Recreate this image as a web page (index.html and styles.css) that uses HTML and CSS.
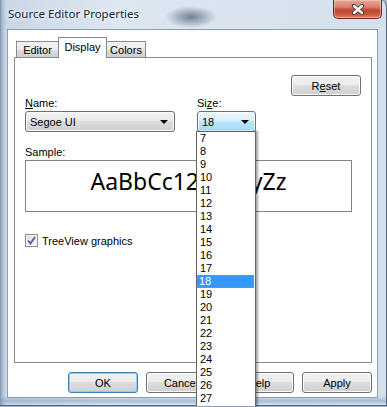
FILE: index.html
```html
<!DOCTYPE html>
<html lang="en">
  <head>
    <meta charset="UTF-8" />
    <meta name="viewport" content="width=device-width, initial-scale=1.0" />
    <title>Source Editor Properties</title>
    <link rel="stylesheet" href="styles.css">
  </head>
  <body>
    <div class="window">
      <!-- 제목 표시줄 -->
      <div class="titlebar">
        <span class="title">Source Editor Properties</span>
        <button class="close">
          <svg width="14" height="11" viewBox="0 0 14 11">
            <path d="M3 2 L11 9 M11 2 L3 9" stroke="#3b3b3b" stroke-width="4.2" stroke-linecap="round" fill="none"/>
            <path d="M3 2 L11 9 M11 2 L3 9" stroke="#ffffff" stroke-width="2.4" stroke-linecap="round" fill="none"/>
          </svg>
        </button>
      </div>

      <div class="client">
        <!-- 탭 -->
        <div class="tabs">
          <span class="tab editor">Editor</span>
          <span class="tab active">Display</span>
          <span class="tab colors">Colors</span>
        </div>

        <div class="page">
          <div class="reset-row">
            <button class="btn">R<u>e</u>set</button>
          </div>

          <div class="fields">
            <div class="field">
              <span class="label"><u>N</u>ame:</span>
              <div class="combo name-combo">Segoe UI<span class="arrow"></span></div>
            </div>
            <div class="field size-field">
              <span class="label">Si<u>z</u>e:</span>
              <div class="combo hot size-combo">18<span class="arrow"></span></div>
              <ul class="droplist">
                <li>7</li><li>8</li><li>9</li><li>10</li><li>11</li><li>12</li><li>13</li>
                <li>14</li><li>15</li><li>16</li><li>17</li><li class="selected">18</li><li>19</li><li>20</li>
                <li>21</li><li>22</li><li>23</li><li>24</li><li>25</li><li>26</li><li>27</li>
              </ul>
            </div>
          </div>

          <span class="label sample-label">Sample:</span>
          <div class="sample">AaBbCc123XxYyZz</div>

          <div class="check">
            <span class="box">
              <svg width="9" height="9" viewBox="0 0 9 9">
                <path d="M1 4.5 L3.5 7.5 L8 1" stroke="#4a5f97" stroke-width="1.8" fill="none"/>
              </svg>
            </span>
            TreeView graphics
          </div>
        </div>

        <!-- 아래 버튼 -->
        <div class="buttons">
          <button class="btn default">OK</button>
          <button class="btn">Cancel</button>
          <button class="btn">Help</button>
          <button class="btn">Apply</button>
        </div>
      </div>
    </div>
  </body>
</html>
```

FILE: styles.css
```css
body{
  margin: 0;
  width: 387px;
  height: 407px;
  overflow: hidden;
  background-color: #9fb2c6;
  font-family: "Liberation Sans", Arial, sans-serif;
  font-size: 11px;
  color: #000;
}
/* 창 전체 틀 (유리 테두리) */
.window{
  box-sizing: border-box;
  width: 387px;
  height: 406px;
  padding: 0 8px 8px 7px;
  border-right: 1px solid #55667a;
  border-bottom: 1px solid #55667a;
  border-top-right-radius: 7px;
  background:
    radial-gradient(ellipse 26px 11px at 191px 17px, rgba(70, 86, 108, 0.7), rgba(70, 86, 108, 0)),
    linear-gradient(to bottom, rgba(255, 255, 255, 0) 396px, rgba(120, 150, 190, 0.5) 401px, rgba(255, 255, 255, 0) 405px),
    linear-gradient(to right, #7b8fa5 0, #a9bcd0 2px, #c9d7e6 6px, #dde7f2 30%, #d4e0ed 100%);
}
.titlebar{
  display: flex;
  justify-content: space-between;
  align-items: flex-start;
  height: 29px;
  margin-right: -4px;
}
.title{
  margin-top: 6px;
  margin-left: 1px;
  font-family: "Noto Sans", "Open Sans", sans-serif;
  font-size: 11.5px;
  color: #14233a;
  text-shadow: 0 0 6px #fff, 0 0 3px #fff;
}
.close{
  display: flex;
  align-items: center;
  justify-content: center;
  width: 49px;
  height: 19px;
  padding: 0;
  border: 1px solid #6b2a22;
  border-top: none;
  border-radius: 0 0 5px 5px;
  background: linear-gradient(to bottom, #e7a696 0, #d7806d 40%, #c3452d 55%, #c8553c 80%, #e08a6e 100%);
  box-shadow: inset 0 0 0 1px rgba(255, 210, 200, 0.5);
}
/* 흰색 작업 영역 */
.client{
  box-sizing: border-box;
  height: 369px;
  padding: 7px 5px 0 6px;
  border: 1px solid #8d9db0;
  background-color: #fff;
}
.tabs{
  display: flex;
  align-items: flex-end;
  height: 20px;
  padding-left: 2px;
}
.tab{
  box-sizing: border-box;
  display: flex;
  justify-content: center;
  align-items: center;
  height: 16px;
  padding-top: 1px;
  border: 1px solid #898c95;
  border-bottom: none;
  background: linear-gradient(to bottom, #f2f2f2 0, #ebebeb 50%, #dddddd 50%, #cfcfcf 100%);
}
.tab.editor{
  width: 42px;
  border-right: none;
}
.tab.colors{
  width: 39px;
  border-left: none;
}
.tab.active{
  position: relative;
  z-index: 1;
  width: 49px;
  height: 21px;
  margin-bottom: -1px;
  padding-top: 0;
  padding-bottom: 3px;
  background: #fff;
}
.page{
  box-sizing: border-box;
  height: 306px;
  padding: 17px 10px 0 10px;
  border: 1px solid #898c95;
  background-color: #fff;
}
.reset-row{
  display: flex;
  justify-content: flex-end;
}
/* 일반 버튼 */
.btn{
  box-sizing: border-box;
  width: 70px;
  height: 21px;
  padding: 0;
  border: 1px solid #707070;
  border-radius: 3px;
  background: linear-gradient(to bottom, #f2f2f2 0, #ebebeb 50%, #dddddd 50%, #cfcfcf 100%);
  box-shadow: inset 0 0 0 1px #fcfcfc;
  font-family: "Liberation Sans", Arial, sans-serif;
  font-size: 11px;
  color: #000;
}
.btn.default{
  border-color: #3c7fb1;
  box-shadow: inset 0 0 0 1px #7fd4f7;
}
.fields{
  display: flex;
  gap: 22px;
  margin-top: 1px;
}
.field{
  display: flex;
  flex-direction: column;
}
.size-field{
  position: relative;
}
.label{
  display: block;
  height: 14px;
  line-height: 13px;
}
.combo{
  box-sizing: border-box;
  display: flex;
  align-items: center;
  justify-content: space-between;
  height: 21px;
  padding: 0 6px 0 4px;
  border: 1px solid #707070;
  border-radius: 3px;
  background: linear-gradient(to bottom, #f2f2f2 0, #ebebeb 50%, #dddddd 50%, #cfcfcf 100%);
  box-shadow: inset 0 0 0 1px #fcfcfc;
}
.name-combo{
  width: 150px;
}
.size-combo{
  width: 59px;
}
.combo.hot{
  border-color: #3c7fb1;
  background: linear-gradient(to bottom, #eaf6fd 0, #d9f0fc 50%, #bee6fd 50%, #a7d9f5 100%);
}
.arrow{
  width: 0;
  height: 0;
  border-left: 4px solid transparent;
  border-right: 4px solid transparent;
  border-top: 4px solid #000;
}
/* 글꼴 크기 목록 */
.droplist{
  position: absolute;
  z-index: 5;
  top: 34px;
  left: -1px;
  box-sizing: border-box;
  width: 60px;
  height: 275px;
  margin: 0;
  padding: 0;
  list-style: none;
  overflow: hidden;
  border: 1px solid #646464;
  border-bottom: none;
  background-color: #fff;
  box-shadow: 2px 0 2px rgba(0, 0, 0, 0.35);
}
.droplist li{
  height: 13px;
  line-height: 13px;
  padding-left: 3px;
}
.droplist li.selected{
  margin: 0 1px 0 0;
  padding-left: 2px;
  background-color: #3399ff;
  color: #fff;
  outline: 1px dotted #c08a40;
  outline-offset: -1px;
}
.sample-label{
  margin-top: 14px;
}
.sample{
  box-sizing: border-box;
  width: 327px;
  height: 52px;
  padding-top: 4px;
  border: 1px solid #828282;
  font-family: "Noto Sans", "Open Sans", sans-serif;
  font-size: 23px;
  line-height: 32px;
  text-align: center;
}
.check{
  display: flex;
  align-items: center;
  gap: 4px;
  margin-top: 22px;
}
.box{
  box-sizing: border-box;
  display: flex;
  align-items: center;
  justify-content: center;
  width: 13px;
  height: 13px;
  border: 1px solid #8e8f8f;
  background: linear-gradient(135deg, #dcdcdc, #f8f8f8);
  box-shadow: inset 0 0 0 1px #f4f4f4;
}
.buttons{
  display: flex;
  justify-content: flex-end;
  gap: 8px;
  margin-top: 9px;
}
```
